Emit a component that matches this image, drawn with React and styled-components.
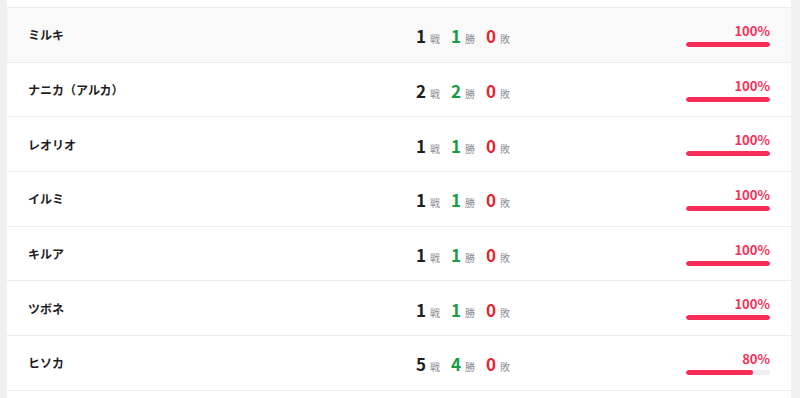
import React from 'react';
import styled, { createGlobalStyle } from 'styled-components';

const GlobalStyle = createGlobalStyle`
  html, body {
    margin: 0;
    padding: 0;
    background: #f0f0f3;
    font-family: 'Noto Sans CJK JP', 'Noto Sans', sans-serif;
  }
`;

const Page = styled.div`
  padding: 0 9px 0 7px;
  height: 398px;
  overflow: hidden;
`;

const Card = styled.div`
  background: #ffffff;
  height: 100%;
`;

const TopCap = styled.div`
  height: 7px;
  border-bottom: 1px solid #ececef;
`;

const Row = styled.div`
  display: grid;
  grid-template-columns: 388px auto 1fr;
  align-items: center;
  height: 53.7px;
  padding: 0 21px 0 21px;
  border-bottom: 1px solid #ececef;
  background: ${(p) => (p.$active ? '#f9f9f9' : '#ffffff')};
`;

const Name = styled.div`
  font-size: 12px;
  font-weight: 700;
  color: #1e1e24;
`;

const Stats = styled.div`
  display: flex;
  align-items: baseline;
  gap: 11px;
  padding-top: 2px;
`;

const Stat = styled.span`
  display: inline-flex;
  align-items: baseline;
  gap: 4px;
`;

const Num = styled.span`
  font-size: 17px;
  font-weight: 700;
  color: ${(p) => p.$color};
`;

const Unit = styled.span`
  font-size: 10px;
  color: #8c8c96;
`;

const Rate = styled.div`
  display: flex;
  flex-direction: column;
  align-items: flex-end;
  gap: 4px;
  padding-top: 1px;
`;

const Percent = styled.span`
  font-size: 13px;
  font-weight: 700;
  color: #f5305a;
  line-height: 14px;
`;

const Track = styled.div`
  width: 84px;
  height: 5px;
  border-radius: 3px;
  background: #efeff3;
  overflow: hidden;
`;

const Fill = styled.div`
  height: 100%;
  border-radius: 3px;
  background: #f72d57;
`;

const players = [
  { name: 'ミルキ', games: 1, wins: 1, losses: 0, active: true },
  { name: 'ナニカ（アルカ）', games: 2, wins: 2, losses: 0 },
  { name: 'レオリオ', games: 1, wins: 1, losses: 0 },
  { name: 'イルミ', games: 1, wins: 1, losses: 0 },
  { name: 'キルア', games: 1, wins: 1, losses: 0 },
  { name: 'ツボネ', games: 1, wins: 1, losses: 0 },
  { name: 'ヒソカ', games: 5, wins: 4, losses: 0 },
];

export default function App() {
  return (
    <Page>
      <GlobalStyle />
      <Card>
        <TopCap />
        {players.map((p) => {
          const rate = Math.round((p.wins / p.games) * 100);
          return (
            <Row key={p.name} $active={p.active}>
              <Name>{p.name}</Name>
              <Stats>
                <Stat>
                  <Num $color="#1e1e24">{p.games}</Num>
                  <Unit>戦</Unit>
                </Stat>
                <Stat>
                  <Num $color="#179c45">{p.wins}</Num>
                  <Unit>勝</Unit>
                </Stat>
                <Stat>
                  <Num $color="#e8232f">{p.losses}</Num>
                  <Unit>敗</Unit>
                </Stat>
              </Stats>
              <Rate>
                <Percent>{rate}%</Percent>
                <Track>
                  <Fill style={{ width: `${rate}%` }} />
                </Track>
              </Rate>
            </Row>
          );
        })}
      </Card>
    </Page>
  );
}
